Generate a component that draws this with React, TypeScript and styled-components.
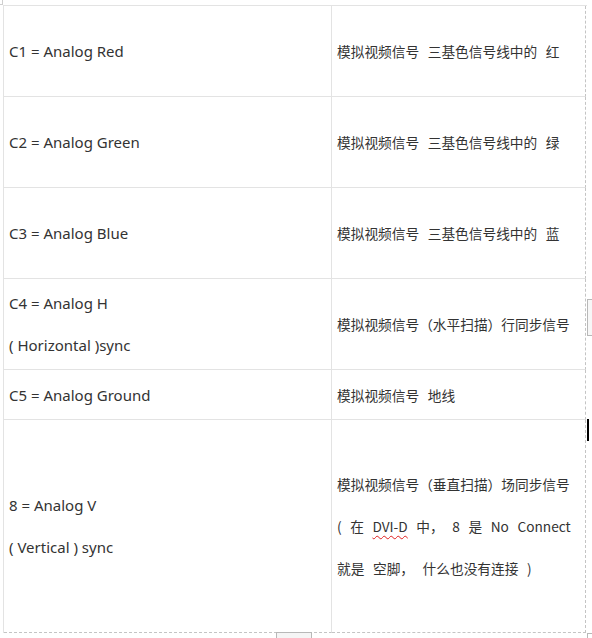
import React from "react";
import styled, { createGlobalStyle } from "styled-components";

const Global = createGlobalStyle`
  html, body { margin: 0; padding: 0; background: #ffffff; }
  body { width: 592px; height: 638px; overflow: hidden; }
`;

const Page = styled.div`
  position: relative;
  width: 592px;
  height: 638px;
  box-sizing: border-box;
  padding: 5px 0 0 3px;
  overflow: hidden;
  background: #ffffff;
  font-family: "Noto Sans", "Noto Sans CJK SC", sans-serif;
  color: #333333;
`;

const Table = styled.div`
  display: grid;
  grid-template-columns: 328px 254px;
  grid-template-rows: 91px 91px 91px 91px 50px 213px;
  width: 583px;
  border-left: 1px solid #e3e3e3;
  border-top: 1px solid #e3e3e3;
`;

const Cell = styled.div<{ $side: "key" | "desc"; $last?: boolean }>`
  box-sizing: border-box;
  display: flex;
  flex-direction: column;
  justify-content: center;
  padding: 0 5px;
  border-bottom: 1px ${(p) => (p.$last ? "dashed #c4c4c4" : "solid #e3e3e3")};
  border-right: 1px ${(p) => (p.$side === "desc" ? "dashed #c4c4c4" : "solid #e3e3e3")};
  font-family: ${(p) =>
    p.$side === "key"
      ? `"Noto Sans", "Noto Sans CJK SC", sans-serif`
      : `"Noto Sans CJK SC", "Noto Sans", sans-serif`};
  font-size: ${(p) => (p.$side === "key" ? "15px" : "13.7px")};
  word-spacing: ${(p) => (p.$side === "key" ? "0" : "5.5px")};
  line-height: 42px;
  white-space: pre;
`;

const Line = styled.div``;

const JustifiedLine = styled.div`
  width: 231px;
  text-align: justify;
  text-align-last: justify;
`;

const Misspelled = styled.span`
  text-decoration: underline wavy #e02020;
  text-decoration-thickness: 1px;
  text-underline-offset: 3px;
`;

const CornerMark = styled.div`
  position: absolute;
  left: 0;
  top: 0;
  width: 2px;
  height: 4px;
  border-right: 1px solid #cfcfcf;
  border-bottom: 1px solid #cfcfcf;
`;

const SideTab = styled.div`
  position: absolute;
  left: 587px;
  top: 299px;
  width: 12px;
  height: 35px;
  border: 1px solid #b8b8b8;
  background: #f7f7f7;
`;

const Caret = styled.div`
  position: absolute;
  left: 587px;
  top: 419px;
  width: 2px;
  height: 22px;
  background: #000000;
`;

const BottomTab = styled.div`
  position: absolute;
  left: 276px;
  top: 632px;
  width: 34px;
  height: 10px;
  border: 1px solid #b8b8b8;
  background: #f5f5f5;
`;

const BottomCorner = styled.div`
  position: absolute;
  left: 587px;
  top: 633px;
  width: 6px;
  height: 6px;
  border-left: 1px solid #b8b8b8;
  border-top: 1px solid #b8b8b8;
`;

type Row = { key: string[]; desc: React.ReactNode };

const rows: Row[] = [
  { key: ["C1 = Analog Red"], desc: <Line>模拟视频信号 三基色信号线中的 红</Line> },
  { key: ["C2 = Analog Green"], desc: <Line>模拟视频信号 三基色信号线中的 绿</Line> },
  { key: ["C3 = Analog Blue"], desc: <Line>模拟视频信号 三基色信号线中的 蓝</Line> },
  { key: ["C4 = Analog H", "( Horizontal )sync"], desc: <Line>模拟视频信号（水平扫描）行同步信号</Line> },
  { key: ["C5 = Analog Ground"], desc: <Line>模拟视频信号 地线</Line> },
  {
    key: ["8 = Analog V", "( Vertical ) sync"],
    desc: (
      <>
        <Line>模拟视频信号（垂直扫描）场同步信号</Line>
        <JustifiedLine>
          ( 在 <Misspelled>DVI-D</Misspelled> 中， 8 是 No Connect
        </JustifiedLine>
        <Line>就是 空脚， 什么也没有连接 )</Line>
      </>
    ),
  },
];

export default function App() {
  return (
    <>
      <Global />
      <Page>
        <Table>
          {rows.map((r, i) => {
            const last = i === rows.length - 1;
            return (
              <React.Fragment key={i}>
                <Cell $side="key" $last={last}>
                  {r.key.map((k) => (
                    <Line key={k}>{k}</Line>
                  ))}
                </Cell>
                <Cell $side="desc" $last={last}>
                  {r.desc}
                </Cell>
              </React.Fragment>
            );
          })}
        </Table>
        <CornerMark />
        <SideTab />
        <Caret />
        <BottomTab />
        <BottomCorner />
      </Page>
    </>
  );
}
